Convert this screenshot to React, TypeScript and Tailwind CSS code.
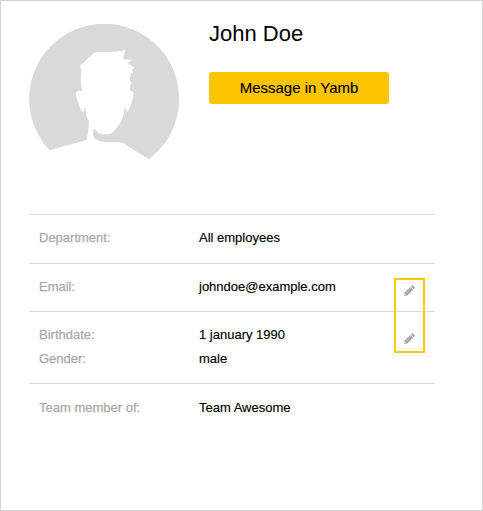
import React from "react";

function Pencil() {
  return (
    <svg className="block h-[11px] w-[11px]" viewBox="0 0 33 33" fill="#a6a6a6">
      <path d="M0.500 32.500 1.500 23 19 6 27.500 14.500 10.500 31.500Z" />
      <path d="M20.500 4.500 24 1.500Q26 0 28 2L31.500 5.500Q33.500 7.500 31.500 9.500L28.800 13Z" />
      <path d="M6 24 20 10" stroke="#c8c8c8" strokeWidth="1.500" />
      <path d="M3 27 6.500 30.500" stroke="#ffffff" strokeWidth="1.500" />
    </svg>
  );
}

function Avatar() {
  return (
    <svg className="block h-[137px] w-[150px]" viewBox="27 27 450 411" fill="#d9d9d9">
      <path
        fillRule="evenodd"
        d="M89 406 A225 225 0 1 1 386 432.500 L326 395 Q306 381 294 382 L258 382 Q236 381 222 368 Q218 362 220 342 C223 341 225 344 229 348 Q238 357 246 358 L266 358 Q276 355 286 344 C300 328 311 310 314 280 L317 279 Q318 288 320 291 C327 289 329 278 333 268 C338 254 341 239 341 233 Q337 227 331 227 L329 226 L331 211 L335 203 L330 196 L332 175 L340 175 L336 164 L344 157 L323 146 L335 135 L308 131 Q316 115 315 104 C300 110 276 111 258 111 L232 111 Q224 112 218 117 C206 127 193 143 179 152 L184 164 L182 201 L187 231 Q181 226 174 227 L167 234 C167 241 174 259 179 276 Q184 289 190 291 L194 279 L197 280 C197 300 199 307 207 318 L204 355 L200 375 Z"
      />
    </svg>
  );
}

type Field = { label: string; value: string };

function Section({ fields, className, editable = false }: { fields: Field[]; className: string; editable?: boolean }) {
  return (
    <section className={`flex border-t border-[#d9d9d9] pl-[10px] ${className}`}>
      <dl className="grid w-[355px] auto-rows-[24px] grid-cols-[160px_1fr] content-start leading-6">
        {fields.map((field) => (
          <React.Fragment key={field.label}>
            <dt className="text-[#a9a9a9] [-webkit-text-stroke:0.25px_#a9a9a9]">{field.label}</dt>
            <dd className="text-black [-webkit-text-stroke:0.15px_#000000]">{field.value}</dd>
          </React.Fragment>
        ))}
      </dl>
      {editable && <div className="pl-[10px] pt-[10px]"><Pencil /></div>}
    </section>
  );
}

export default function App() {
  return (
    <main className="h-[511px] w-[483px] border border-[#d3d3d3] bg-white pl-7 pt-[23px] font-['Liberation_Sans',Arial,sans-serif] text-[13px]">
      <header className="flex h-[190px] gap-[30px]">
        <Avatar />
        <div>
          <h1 className="-mt-[3px] h-[51px] text-[22px] leading-[26px] text-black">John Doe</h1>
          <button className="block h-8 w-[180px] rounded-[3px] bg-[#ffc400] text-[15px] text-black [-webkit-text-stroke:0.15px_#000000]">Message in Yamb</button>
        </div>
      </header>
      <div className="relative w-[406px]">
        <Section className="h-[49px] pt-[11px]" fields={[{ label: "Department:", value: "All employees" }]} />
        <Section className="h-12 pt-[11px]" editable fields={[{ label: "Email:", value: "johndoe@example.com" }]} />
        <Section
          className="h-[72px] pt-[11px]"
          editable
          fields={[
            { label: "Birthdate:", value: "1 january 1990" },
            { label: "Gender:", value: "male" },
          ]}
        />
        <Section className="h-12 pt-3" fields={[{ label: "Team member of:", value: "Team Awesome" }]} />
        <div className="pointer-events-none absolute left-[365px] top-16 h-[75px] w-[31px] border-2 border-[#ffcc00]" />
      </div>
    </main>
  );
}
